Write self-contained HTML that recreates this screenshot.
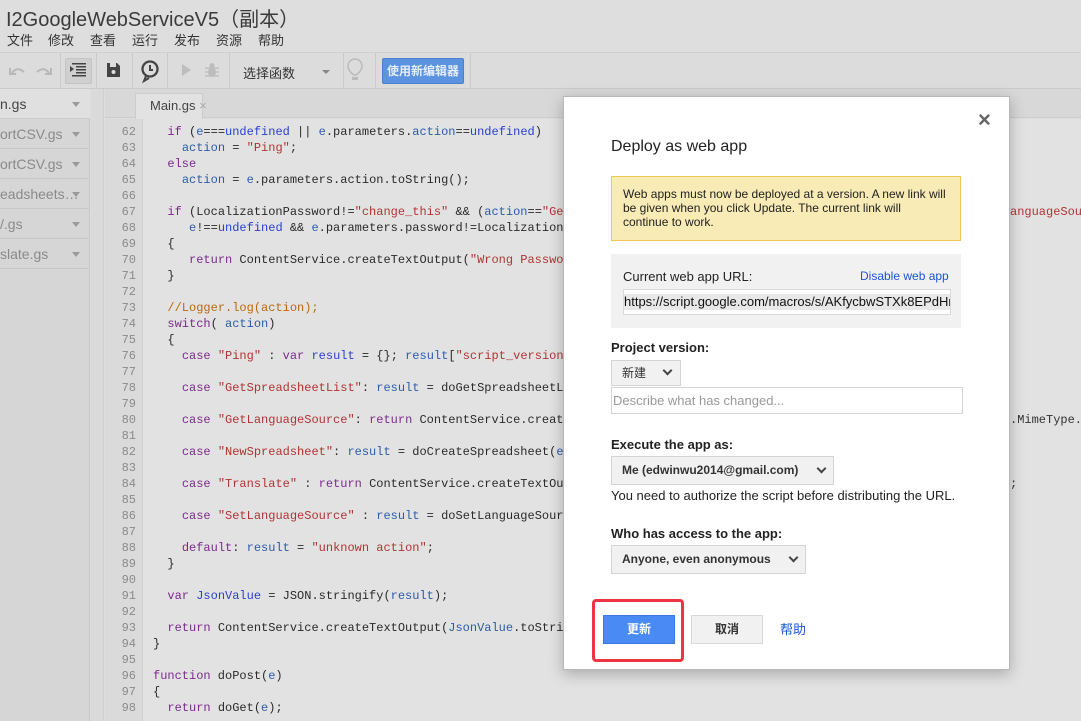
<!DOCTYPE html>
<html><head><meta charset="utf-8"><style>
*{margin:0;padding:0;box-sizing:border-box}
body{width:1081px;height:721px;overflow:hidden;background:#dedede;font-family:"Liberation Sans","Noto Sans CJK SC",sans-serif;position:relative;color:#333}
.abs{position:absolute}
.title{left:6px;top:3px;font-size:20px;color:#3a3a3a;white-space:nowrap}
.menu{top:30px;font-size:13px;color:#333}
.tb{left:0;top:52px;width:1081px;height:37px;background:#dcdcdc;border-top:1px solid #cfcfcf;border-bottom:1px solid #cacaca}
.sep{position:absolute;top:0;width:1px;height:36px;background:#cbcbcb}
.side{left:0;top:89px;width:90px;height:632px;background:#d6d6d6;border-right:1px solid #c8c8c8}
.fi{position:absolute;left:0;width:90px;height:30px;border-bottom:1px solid #c9c9c9;font-size:14px;color:#8a8a8a;line-height:30px;white-space:nowrap;overflow:hidden}
.fi .ar{position:absolute;left:72px;top:13px;width:0;height:0;border-left:4px solid transparent;border-right:4px solid transparent;border-top:5px solid #9a9a9a}
.strip{left:91px;top:89px;width:13px;height:632px;background:#dadada;border-right:1px solid #cfcfcf}
.tabbar{left:105px;top:89px;width:976px;height:29px;background:#d8d8d8;border-bottom:1px solid #cccccc}
.tab{left:135px;top:93px;width:68px;height:26px;background:#e2e2e2;border:1px solid #cccccc;border-bottom:none;font-size:13px;line-height:24px;padding-left:14px;color:#444;white-space:nowrap}
.code{left:105px;top:119px;width:976px;height:602px;background:#e2e2e2}
.gut{left:105px;top:119px;width:38px;height:602px;background:#dadada;border-right:1px solid #d0d0d0}
pre{font-family:"Liberation Mono",monospace;font-size:12px;line-height:16px;position:absolute;white-space:pre}
.ln{left:108px;top:124px;width:28px;text-align:right;color:#8a8a8a}
.src{left:153px;top:124px;color:#2a2a2a}
.k{color:#7b2a8c}.s{color:#b03434}.v{color:#2b5ca8}.d{color:#2a3fd0}.c{color:#b86a10}
.dlg{left:563px;top:96px;width:447px;height:574px;background:#fff;border:1px solid #b8b8b8;box-shadow:0 4px 14px rgba(0,0,0,.25)}
.dlg *{position:absolute}
.lbl{font-size:13px;font-weight:bold;color:#222;white-space:nowrap}
.sel{background:#f1f1f1;border:1px solid #d4d4d4;font-size:12px;font-weight:bold;color:#333;padding-left:10px;white-space:nowrap}
.chev{width:7px;height:7px;border-right:2px solid #444;border-bottom:2px solid #444;transform:rotate(45deg)}
</style></head><body>
<div class="abs title">I2GoogleWebServiceV5（副本）</div>
<div class="abs menu" style="left:7px">文件</div>
<div class="abs menu" style="left:48px">修改</div>
<div class="abs menu" style="left:90px">查看</div>
<div class="abs menu" style="left:132px">运行</div>
<div class="abs menu" style="left:174px">发布</div>
<div class="abs menu" style="left:216px">资源</div>
<div class="abs menu" style="left:258px">帮助</div>
<div class="abs tb">
 <div class="sep" style="left:60px"></div><div class="sep" style="left:96px"></div><div class="sep" style="left:132px"></div><div class="sep" style="left:167px"></div><div class="sep" style="left:229px"></div><div class="sep" style="left:343px"></div><div class="sep" style="left:375px"></div><div class="sep" style="left:470px"></div>
 <div class="abs" style="left:65px;top:5px;width:27px;height:26px;background:#d0d0d0;border:1px solid #c4c4c4;border-radius:2px"></div>
 <svg class="abs" style="left:0;top:0" width="480" height="36">
  <path d="M12 20q5-7 12-1M10 15v6h6" stroke="#b8b8b8" stroke-width="2" fill="none"/>
  <path d="M49 20q-5-7-12-1M51 15v6h-6" stroke="#b8b8b8" stroke-width="2" fill="none"/>
  <g fill="#444"><rect x="72" y="10" width="14" height="1.5"/><rect x="76" y="13" width="10" height="1.5"/><rect x="76" y="16" width="10" height="1.5"/><rect x="76" y="19" width="10" height="1.5"/><rect x="72" y="22" width="14" height="1.5"/><path d="M70 13l4 3-4 3z"/></g>
  <path d="M107 10h10l3 3v11h-13z" fill="#444"/><rect x="110" y="10" width="6" height="4" fill="#dcdcdc"/><circle cx="113.5" cy="19" r="2" fill="#dcdcdc"/>
  <circle cx="150" cy="16" r="7.5" stroke="#444" stroke-width="2.3" fill="none"/><path d="M150 12v5h3M146 23l-2 5 5-3" stroke="#444" stroke-width="2" fill="none"/>
  <path d="M182 11l9 6-9 6z" fill="#bdbdbd"/>
  <ellipse cx="212" cy="19" rx="4" ry="5" fill="#bdbdbd"/><circle cx="212" cy="12.5" r="2.5" fill="#bdbdbd"/><path d="M205 15l14 0M205 19h14M205 23l14 0" stroke="#bdbdbd" stroke-width="1.2"/>
  <path d="M322 17l4 4 4-4z" fill="#888"/>
  <path d="M354 22q-6-4-6-9a7 7 0 0 1 14 0q0 5-6 9z" stroke="#bbb" stroke-width="1.5" fill="none"/><rect x="352" y="24" width="6" height="3" fill="#bbb"/>
 </svg>
 <div class="abs" style="left:243px;top:10px;font-size:13px;color:#333">选择函数</div>
 <div class="abs" style="left:382px;top:5px;width:82px;height:26px;background:#5b93e0;border:1px solid #4a80cc;border-radius:2px;color:#e6eefa;font-size:12px;font-weight:bold;line-height:24px;text-align:center">使用新编辑器</div>
</div>
<div class="abs side">
 <div class="fi" style="top:0;background:#e0e0e0;color:#444">n.gs<span class="ar"></span></div>
 <div class="fi" style="top:30px">ortCSV.gs<span class="ar"></span></div>
 <div class="fi" style="top:60px">ortCSV.gs<span class="ar"></span></div>
 <div class="fi" style="top:90px">eadsheets…<span class="ar"></span></div>
 <div class="fi" style="top:120px">/.gs<span class="ar"></span></div>
 <div class="fi" style="top:150px">slate.gs<span class="ar"></span></div>
</div>
<div class="abs strip"></div>
<div class="abs tabbar"></div>
<div class="abs code"></div>
<div class="abs gut"></div>
<div class="abs tab">Main.gs <span style="color:#aaa">×</span></div>
<pre class="ln">62
63
64
65
66
67
68
69
70
71
72
73
74
75
76
77
78
79
80
81
82
83
84
85
86
87
88
89
90
91
92
93
94
95
96
97
98</pre>
<pre class="src">  <span class="k">if</span> (<span class="v">e</span>===<span class="d">undefined</span> || <span class="v">e</span>.parameters.<span class="v">action</span>==<span class="d">undefined</span>)
    <span class="v">action</span> = <span class="s">"Ping"</span>;
  <span class="k">else</span>
    <span class="v">action</span> = <span class="v">e</span>.parameters.action.toString();

  <span class="k">if</span> (LocalizationPassword!=<span class="s">"change_this"</span> &amp;&amp; (<span class="v">action</span>==<span class="s">"GetLanguageSource"</span> ...
     <span class="v">e</span>!==<span class="d">undefined</span> &amp;&amp; <span class="v">e</span>.parameters.password!=LocalizationPassword))
  {
     <span class="k">return</span> ContentService.createTextOutput(<span class="s">"Wrong Password"</span>);
  }

  <span class="c">//Logger.log(action);</span>
  <span class="k">switch</span>( <span class="v">action</span>)
  {
    <span class="k">case</span> <span class="s">"Ping"</span> : <span class="k">var</span> <span class="d">result</span> = {}; <span class="v">result</span>[<span class="s">"script_version"</span>]

    <span class="k">case</span> <span class="s">"GetSpreadsheetList"</span>: <span class="v">result</span> = doGetSpreadsheetList();

    <span class="k">case</span> <span class="s">"GetLanguageSource"</span>: <span class="k">return</span> ContentService.createTextOutput

    <span class="k">case</span> <span class="s">"NewSpreadsheet"</span>: <span class="v">result</span> = doCreateSpreadsheet(<span class="v">e</span>);

    <span class="k">case</span> <span class="s">"Translate"</span> : <span class="k">return</span> ContentService.createTextOutput

    <span class="k">case</span> <span class="s">"SetLanguageSource"</span> : <span class="v">result</span> = doSetLanguageSource

    <span class="k">default</span>: <span class="v">result</span> = <span class="s">"unknown action"</span>;
  }

  <span class="k">var</span> <span class="d">JsonValue</span> = JSON.stringify(<span class="v">result</span>);

  <span class="k">return</span> ContentService.createTextOutput(<span class="v">JsonValue</span>.toString());
}

<span class="k">function</span> doPost(<span class="v">e</span>)
{
  <span class="k">return</span> doGet(<span class="v">e</span>);</pre>
<pre class="abs" style="left:1010px;top:204px"><span class="s">anguageSou</span></pre>
<pre class="abs" style="left:1010px;top:412px">.MimeType.</pre>
<pre class="abs" style="left:1010px;top:476px">;</pre>
<div class="abs dlg">
 <div style="left:414px;top:10px;font-size:22px;color:#666;font-weight:bold">×</div>
 <div style="left:47px;top:41px;font-size:16px;color:#222">Deploy as web app</div>
 <div style="left:47px;top:79px;width:350px;height:65px;background:#f8ebb5;border:1px solid #efc64f;font-size:12px;color:#222;padding:10px 11px;line-height:14px">Web apps must now be deployed at a version. A new link will be given when you click Update. The current link will continue to work.</div>
 <div style="left:47px;top:157px;width:350px;height:74px;background:#f1f1f1"></div>
 <div style="left:59px;top:172px;font-size:13px;color:#222">Current web app URL:</div>
 <div style="left:296px;top:172px;font-size:12px;color:#1a55d4">Disable web app</div>
 <div style="left:59px;top:192px;width:328px;height:26px;background:#fff;border:1px solid #d9d9d9;overflow:hidden"><span style="position:absolute;left:0;top:4px;height:16px;background:#e8e8e8;font-size:13px;color:#111;white-space:nowrap;line-height:16px">https://script.google.com/macros/s/AKfycbwSTXk8EPdHm</span></div>
 <div class="lbl" style="left:47px;top:243px">Project version:</div>
 <div class="sel" style="left:47px;top:263px;width:70px;height:26px;line-height:24px;font-weight:normal">新建<span class="chev" style="left:52px;top:6px"></span></div>
 <div style="left:47px;top:290px;width:352px;height:27px;border:1px solid #d4d4d4;font-size:13px;color:#999;line-height:25px;padding-left:1px">Describe what has changed...</div>
 <div class="lbl" style="left:47px;top:340px">Execute the app as:</div>
 <div class="sel" style="left:47px;top:359px;width:223px;height:29px;line-height:27px">Me (edwinwu2014@gmail.com)<span class="chev" style="left:206px;top:8px"></span></div>
 <div style="left:47px;top:391px;font-size:13px;color:#222;white-space:nowrap">You need to authorize the script before distributing the URL.</div>
 <div class="lbl" style="left:47px;top:429px">Who has access to the app:</div>
 <div class="sel" style="left:47px;top:448px;width:195px;height:29px;line-height:27px">Anyone, even anonymous<span class="chev" style="left:178px;top:8px"></span></div>
 <div style="left:28px;top:502px;width:92px;height:63px;border:3px solid #ee3344;border-radius:4px"></div>
 <div style="left:39px;top:518px;width:72px;height:29px;background:#4a8af4;border:1px solid #3b78e0;color:#fff;font-size:12px;font-weight:bold;text-align:center;line-height:27px">更新</div>
 <div style="left:127px;top:518px;width:72px;height:29px;background:#f1f1f1;border:1px solid #d8d8d8;color:#333;font-size:12px;font-weight:bold;text-align:center;line-height:27px">取消</div>
 <div style="left:216px;top:522px;font-size:13px;color:#1a55d4">帮助</div>
</div>
</body></html>
